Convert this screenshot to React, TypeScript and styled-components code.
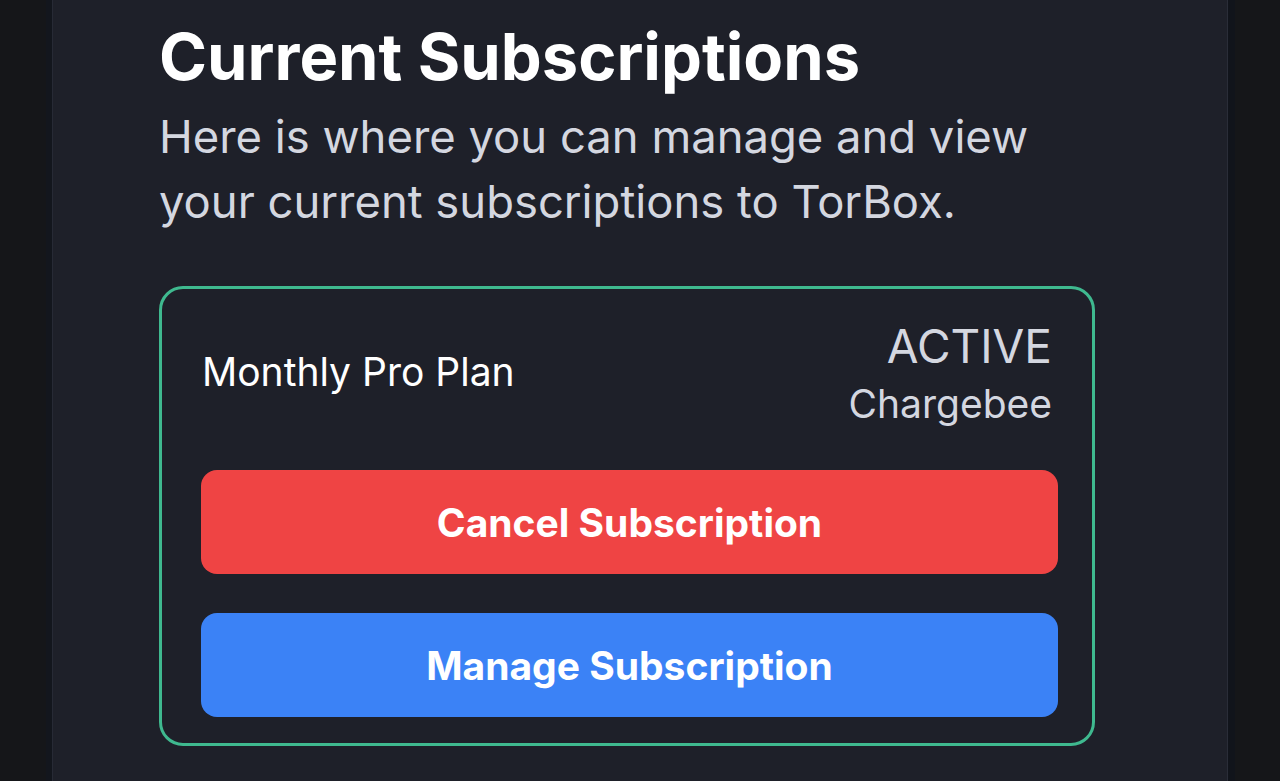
import styled, { createGlobalStyle } from "styled-components";

const GlobalStyle = createGlobalStyle`
  html, body {
    margin: 0;
    padding: 0;
    background: #151619;
    font-family: Inter, "Noto Sans", sans-serif;
    overflow: hidden;
  }
`;

function App() {
  return (
    <>
      <GlobalStyle />
      <Page>
        <Panel>
          <Section>
            <Title>Current Subscriptions</Title>
            <Lead>
              Here is where you can manage and view your current subscriptions
              to TorBox.
            </Lead>
            <Card>
              <CardHeader>
                <PlanName>Monthly Pro Plan</PlanName>
                <Status>
                  <StatusLabel>ACTIVE</StatusLabel>
                  <Provider>Chargebee</Provider>
                </Status>
              </CardHeader>
              <ActionButton $tone="danger">Cancel Subscription</ActionButton>
              <ActionButton $tone="primary">Manage Subscription</ActionButton>
            </Card>
          </Section>
        </Panel>
      </Page>
    </>
  );
}

const Page = styled.div`
  display: flex;
  height: 781px;
  padding-left: 52px;
  box-sizing: border-box;
`;

const Panel = styled.main`
  width: 1176px;
  height: 100%;
  background: #1e2029;
  border-left: 1px solid #272a35;
  border-right: 1px solid #2a2d38;
  box-shadow: -6px 0 0 #13161d, 7px 0 0 #11141b;
  box-sizing: border-box;
  padding: 17px 0 0 106px;
`;

const Section = styled.section`
  width: 936px;
`;

const Title = styled.h2`
  margin: 0;
  font-size: 65px;
  line-height: 80px;
  font-weight: 700;
  color: #ffffff;
`;

const Lead = styled.p`
  margin: 7px 0 0;
  font-size: 45.4px;
  line-height: 65px;
  color: #d4d7e0;
  max-width: 900px;
`;

const Card = styled.div`
  margin-top: 52px;
  border: 3px solid #3fb98f;
  border-radius: 24px;
  padding: 29px 34px 26px 39px;
  display: flex;
  flex-direction: column;
  gap: 39px;
`;

const CardHeader = styled.div`
  display: flex;
  align-items: center;
  justify-content: space-between;
  padding: 0 6px 0 1px;
  margin-bottom: -1px;
`;

const PlanName = styled.span`
  font-size: 39px;
  color: #ffffff;
  margin-top: -7px;
`;

const Status = styled.div`
  display: flex;
  flex-direction: column;
  align-items: flex-end;
`;

const StatusLabel = styled.span`
  font-size: 46px;
  line-height: 57px;
  color: #d4d7e0;
`;

const Provider = styled.span`
  font-size: 39px;
  line-height: 57px;
  color: #d4d7e0;
`;

const ActionButton = styled.button<{ $tone: "danger" | "primary" }>`
  height: 104px;
  border: none;
  border-radius: 16px;
  background: ${(p) => (p.$tone === "danger" ? "#ef4444" : "#3b82f6")};
  color: #ffffff;
  font-family: inherit;
  font-size: 39px;
  font-weight: 700;
  cursor: pointer;
`;

export default App;
